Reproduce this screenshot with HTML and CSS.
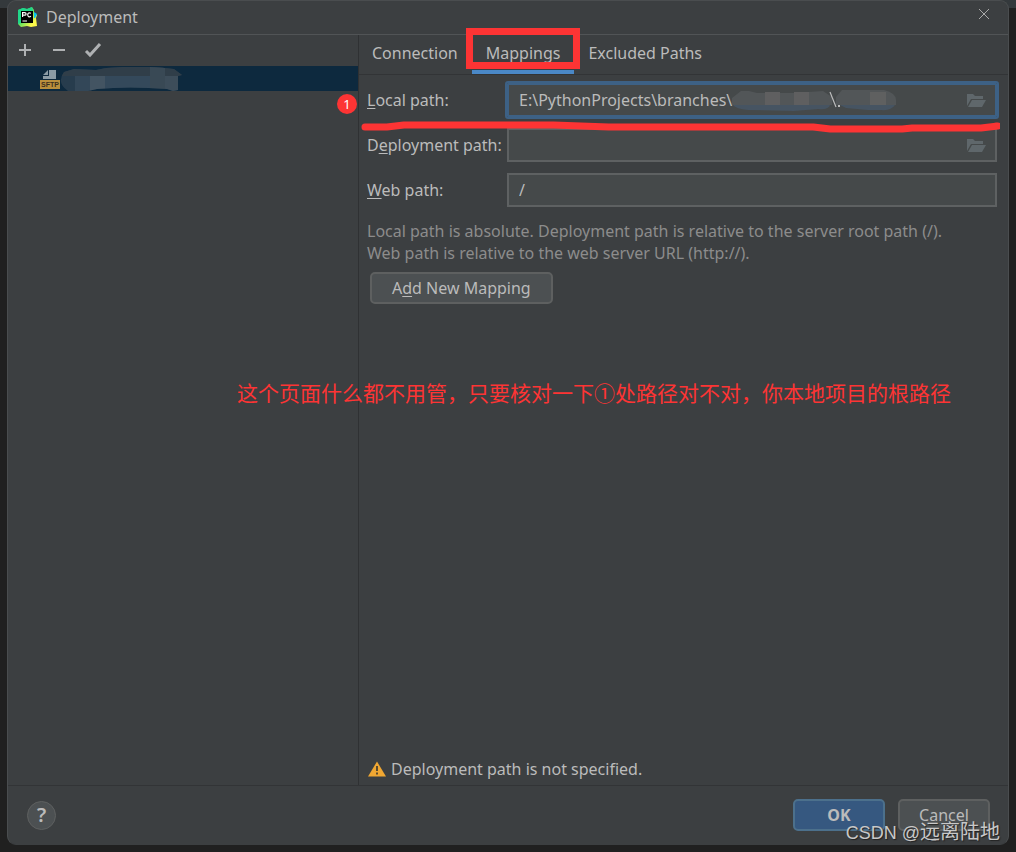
FILE: index.html
```html
<!DOCTYPE html>
<html lang="en">
<head>
<meta charset="utf-8">
<title>Deployment</title>
<link rel="stylesheet" href="styles.css">
</head>
<body>
<main class="dialog">
  <header class="titlebar">
    <svg class="logo" viewBox="0 0 20 20" aria-hidden="true">
      <defs><linearGradient id="g" x1="0" y1="0" x2="1" y2="1"><stop offset="0.2" stop-color="#21d789"/><stop offset="0.5" stop-color="#6be35c"/><stop offset="0.8" stop-color="#fcf84a"/></linearGradient></defs>
      <path fill="url(#g)" d="M1 3 6 1l4 1 5-2 2 3v3l3 2-1 3 1 8-6 1-4-1-6 1-3-3z"/>
      <path fill="#21d789" d="M1 3 6 1l4 1 5-2 1 4H4v12l-3 1z"/>
      <path fill="#07c3f2" d="m17 5 3 2-2 4h-1z"/>
      <path d="M4 4h12v12H4z"/>
      <path fill="none" stroke="#fff" stroke-width="1.2" d="M5.600 10V5.600h2q1.500 0 1.500 1.300T7.600 8.200h-2M14 6.300q-3-1.500-3.300 1.500.3 3 3.300 1.500M5.500 14h4.500"/>
    </svg>
    <h1 class="title">Deployment</h1>
    <button class="close" aria-label="Close"><svg viewBox="0 0 12 12"><path d="m1 1 10 10M11 1 1 11"/></svg></button>
  </header>

  <div class="workspace">
    <aside class="sidebar">
      <div class="toolbar">
        <button class="tool" aria-label="Add"><svg viewBox="0 0 18 18"><path d="M9 3v12M3 9h12"/></svg></button>
        <button class="tool" aria-label="Remove"><svg viewBox="0 0 18 18"><path d="M3 9h12"/></svg></button>
        <button class="tool" aria-label="Use as default"><svg viewBox="0 0 18 18"><path d="m2 10 4 4L16 3"/></svg></button>
      </div>
      <div class="server">
        <svg class="sftp" viewBox="0 0 20 20" role="img" aria-label="SFTP server">
          <path fill="#8b9ba5" d="M9 1h7v9H3V7h6zM3 6l5-5v5z"/>
          <path fill="#b98f3c" d="M0 11h20v9H0z"/>
          <text x="10" y="18" text-anchor="middle" class="sftp-text">SFTP</text>
        </svg>
        <svg class="server-mask" viewBox="0 0 124 24" aria-hidden="true">
          <clipPath id="m1"><path d="M4 5 14 2l22 1 10-2q37-3 68 1l8 6-4 1v14l-5 1-6-2q-38-3-70 0l-9 2H8Q-4 16 4 5z"/></clipPath>
          <g clip-path="url(#m1)"><path fill="#273c4d" d="M0 0h124v24H0z"/><path fill="#303e49" d="M0 0h124v9H0z"/><path fill="#334758" d="M15 9h15v15H15z"/><path fill="#435462" d="M30 9h15v15H30z"/><path fill="#34495b" d="M45 9h45v15H45z"/><path fill="#394955" d="M90 0h15v24H90z"/><path fill="#3d4d5a" d="M105 9h19v15h-19z"/></g>
        </svg>
      </div>
    </aside>

    <section class="panel">
      <nav class="tabs" role="tablist">
        <button class="tab" role="tab">Connection</button>
        <button class="tab active" role="tab" aria-selected="true">Mappings<span class="highlight"></span></button>
        <button class="tab" role="tab">Excluded Paths</button>
      </nav>
      <div class="content">
        <form class="form">
          <div class="row">
            <span class="badge">1</span>
            <label for="local"><u>L</u>ocal path:</label>
            <div class="field focused">
              <input id="local" value="E:\PythonProjects\branches\">
              <svg class="path-mask" viewBox="0 0 164 22" aria-hidden="true">
                <path fill="#525658" d="M9 2h8l8 2h37l29-2 9 6v8H0V9z"/><path fill="#5f5f60" d="M33 3h15v13H33zM62 3h15v13H62z"/><path fill="#465462" d="M1 16h97q-1 5-12 4l-24 2-46-1Q4 20 1 16z"/>
                <path class="slash" d="m98 3 6 15"/><path fill="#bbb" d="M106 16h2v2h-2z"/>
                <path fill="#525658" d="M110 1h42q12 3 12 10v5h-60V8z"/><path fill="#5f6060" d="M138 3h16v13h-16z"/><path fill="#465462" d="M108 16h55q-4 6-14 5h-13l-22-2z"/>
              </svg>
              <button class="browse" type="button" aria-label="Browse local path"><svg viewBox="0 0 20 16"><path d="M1 2h6l2 2h8v3H5l-4 7z"/><path d="M6 8h14l-4 7H2z"/></svg></button>
            </div>
            <svg class="underline" viewBox="0 0 640 14" preserveAspectRatio="none" aria-hidden="true"><path d="M4 8h22l17-2h150l55 2h205l17 2h72l10-1h69l17-2h-2"/></svg>
          </div>
          <div class="row">
            <label for="deploy">D<u>e</u>ployment path:</label>
            <div class="field">
              <input id="deploy">
              <button class="browse" type="button" aria-label="Browse deployment path"><svg viewBox="0 0 20 16"><path d="M1 2h6l2 2h8v3H5l-4 7z"/><path d="M6 8h14l-4 7H2z"/></svg></button>
            </div>
          </div>
          <div class="row">
            <label for="web"><u>W</u>eb path:</label>
            <div class="field"><input id="web" value="/"></div>
          </div>
        </form>
        <p class="hint">Local path is absolute. Deployment path is relative to the server root path (/).<br>Web path is relative to the web server URL (http://).</p>
        <button class="button add">A<u>d</u>d New Mapping</button>
        <p class="warning">
          <svg viewBox="0 0 18 16" aria-hidden="true"><path fill="#f0a732" d="M9 0.500 18 15.500H0z"/><path fill="#5a4a2c" d="M8 5h2v5H8zM8 11.500h2v2H8z"/></svg>
          Deployment path is not specified.
        </p>
      </div>
    </section>
  </div>

  <footer class="footer">
    <button class="help" aria-label="Help">?</button>
    <button class="button primary">OK</button>
    <button class="button">Cancel</button>
  </footer>
  <p class="note" lang="zh-CN">这个页面什么都不用管，只要核对一下①处路径对不对，你本地项目的根路径</p>
  <p class="watermark" lang="zh-CN">CSDN @<span>远离陆地</span></p>
</main>
</body>
</html>
```
FILE: styles.css
```css
* { box-sizing: border-box; }
body {
  margin: 0;
  min-height: 100vh;
  display: flex;
  padding: 0 7px 7px;
  background: linear-gradient(#34393c 8px, #202020 8px);
  color: #bbb;
  font: 16px/22px "Noto Sans", "Noto Sans CJK SC", sans-serif;
}
button, input { font: inherit; color: inherit; }
button { border: 0; padding: 0; background: none; }
svg { display: block; }
p { margin: 0; }
u { text-underline-offset: 2px; text-decoration-thickness: 1px; }

.dialog {
  position: relative;
  flex: 1;
  min-width: 0;
  display: flex;
  flex-direction: column;
  background: #3c3f41;
  border: 1px solid #4a4d4f;
  border-bottom-color: #3c3f41;
  border-radius: 9px;
}
.titlebar {
  display: flex;
  align-items: center;
  gap: 9px;
  height: 34px;
  padding: 0 18px 2px 9px;
  border-bottom: 1px solid #515456;
}
.logo { width: 20px; height: 20px; }
.title { flex: 1; margin: 0; font-size: 16px; font-weight: 400; }
.close svg { width: 12px; height: 12px; margin-bottom: 6px; stroke: #aaa; stroke-width: 1; }

.workspace { flex: 1; display: flex; min-height: 0; }
.sidebar { width: 351px; flex: none; border-right: 1px solid #2f3133; }
.toolbar { display: flex; gap: 16px; height: 31px; padding: 0 8px 2px; align-items: center; }
.tool svg { width: 18px; height: 18px; fill: none; stroke: #afb1b3; stroke-width: 2; }
.tool:last-child svg { stroke-width: 3; }
.server { display: flex; align-items: center; height: 25px; padding-left: 32px; background: #0d293e; }
.sftp { width: 20px; height: 20px; }
.sftp-text { font: bold 7px "Liberation Sans", sans-serif; fill: #3c3020; }
.server-mask { width: 124px; height: 24px; }

.panel { flex: 1; min-width: 0; display: flex; flex-direction: column; }
.tabs { display: flex; height: 40px; border-bottom: 1px solid #323436; }
.tab { position: relative; padding: 0 14px 4px; height: 39px; }
.tab:first-child { padding-left: 13px; }
.tab.active { border-bottom: 4px solid #4a88c7; padding-bottom: 0; }
.highlight { position: absolute; inset: -7px -6px 1px; border: 7px solid #fd3434; }

.content { flex: 1; display: flex; flex-direction: column; align-items: flex-start; padding: 8px 11px 5px 8px; }
.form { display: flex; flex-direction: column; gap: 11px; align-self: stretch; }
.row { position: relative; display: flex; align-items: center; }
.row label { width: 140px; flex: none; white-space: nowrap; }
.field { position: relative; flex: 1; height: 34px; display: flex; align-items: center; border: 2px solid #5e6162; background: #45494a; }
.field input { flex: 1; min-width: 0; align-self: stretch; border: 0; padding: 0 0 0 10px; background: none; outline: 0; }
.focused { border-color: #3d6185; outline: 2px solid #3d6185; border-radius: 1px; }
.browse { margin-right: 9px; }
.browse svg { width: 20px; height: 16px; fill: #5f676b; }
.path-mask { position: absolute; left: 223px; top: 4px; width: 164px; height: 22px; }
.slash { stroke: #bbb; stroke-width: 1.2; }
.badge { position: absolute; left: -30px; top: 11px; width: 20px; height: 20px; border-radius: 50%; background: #fd3434; color: #fff; font-size: 13px; line-height: 20px; text-align: center; }
.underline { position: absolute; z-index: 1; left: -6px; top: 36px; width: calc(100% + 9px); height: 14px; }
.underline path { fill: none; stroke: #fd3434; stroke-width: 7; stroke-linecap: round; stroke-linejoin: round; }

.hint { margin-top: 13px; color: #8c8c8c; }
.button { height: 32px; padding: 0 20px; border: 2px solid #5e6060; border-radius: 5px; background: #4c5052; }
.add { margin: 8px 0 0 3px; }
.warning { display: flex; align-items: center; gap: 5px; margin-top: auto; padding-left: 1px; }
.warning svg { width: 18px; height: 16px; }

.footer { display: flex; align-items: center; gap: 13px; height: 59px; padding: 0 18px 0 19px; border-top: 1px solid #323436; }
.footer .button { width: 92px; padding: 0; }
.footer .primary { background: #365880; border-color: #4c708c; font-weight: 700; }
.help { width: 29px; height: 29px; margin-right: auto; border: 1px solid #5e6060; border-radius: 50%; background: #4c5052; font-size: 20px; font-weight: 600; line-height: 26px; }

.note { position: absolute; left: 229px; top: 376px; color: #fd3434; font: 21px/30px "Noto Sans CJK SC", sans-serif; white-space: nowrap; }
.watermark { position: absolute; right: 8px; bottom: -2px; color: #c8c8c8; font: 18px/26px "Liberation Sans", "Noto Sans CJK SC", sans-serif; text-shadow: 1px 1px 1px #222; white-space: nowrap; }
.watermark span { font-size: 20px; }
```
